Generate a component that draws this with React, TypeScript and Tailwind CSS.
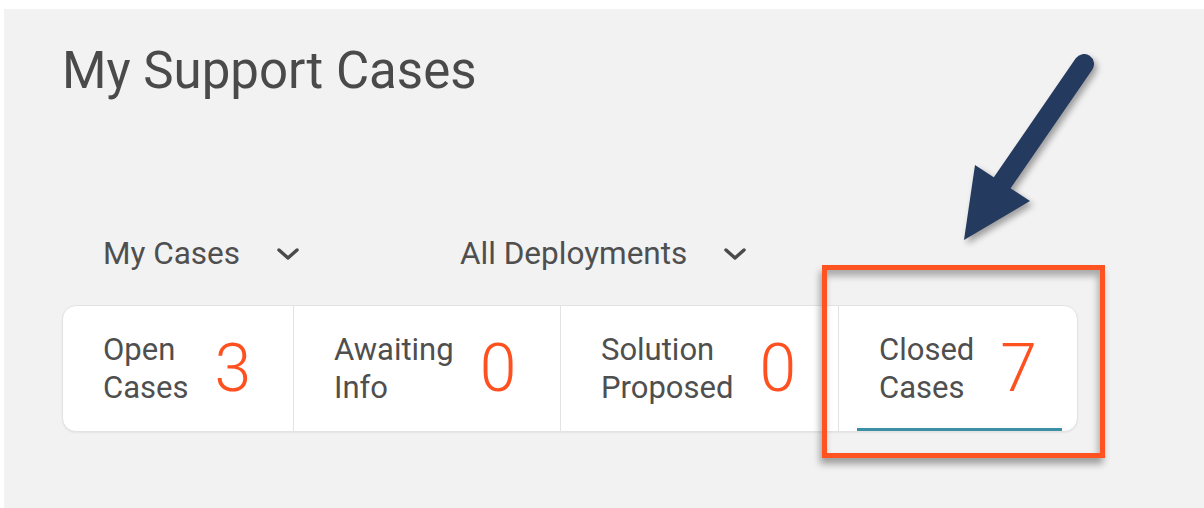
import React from "react";

type Stat = { label: [string, string]; count: number; width: string };

const stats: Stat[] = [
  { label: ["Open", "Cases"], count: 3, width: "w-[230px]" },
  { label: ["Awaiting", "Info"], count: 0, width: "w-[267px]" },
  { label: ["Solution", "Proposed"], count: 0, width: "w-[278px]" },
  { label: ["Closed", "Cases"], count: 7, width: "flex-1" },
];

const Chevron: React.FC = () => (
  <svg width="24" height="14" viewBox="0 0 24 14" fill="none">
    <polyline
      points="3,3 12,11 21,3"
      stroke="#4a4a4a"
      strokeWidth="3.4"
      strokeLinecap="round"
      strokeLinejoin="round"
    />
  </svg>
);

const Dropdown: React.FC<{ label: string; className?: string }> = ({ label, className }) => (
  <button className={`flex items-center gap-[36px] text-[31.5px] leading-[36px] text-[#4f4f4f] ${className ?? ""}`}>
    <span>{label}</span>
    <Chevron />
  </button>
);

const App: React.FC = () => {
  return (
    <div className="w-full h-[508px] bg-white pt-[9px] pl-[4px] font-[Roboto,sans-serif] overflow-hidden">
      <div className="relative h-full bg-[#f2f2f2] pl-[58px] pt-[32px]">
        <h1 className="text-[51px] leading-[60px] text-[#4a4a4a]">My Support Cases</h1>

        <div className="flex mt-[135px] pl-[41px]">
          <Dropdown label="My Cases" className="w-[357px]" />
          <Dropdown label="All Deployments" />
        </div>

        <div className="flex mt-[33px] w-[1016px] h-[127px] bg-white border border-[#e3e3e3] rounded-[14px] overflow-hidden shadow-[0_1px_2px_rgba(0,0,0,0.06)]">
          {stats.map((s, i) => (
            <div
              key={s.label.join(" ")}
              className={`relative flex items-center gap-[26px] pl-[40px] ${s.width} ${i > 0 ? "border-l border-[#e3e3e3]" : ""}`}
            >
              <div className="text-[31px] leading-[38px] text-[#4f4f4f]">
                <div>{s.label[0]}</div>
                <div>{s.label[1]}</div>
              </div>
              <span className="text-[66px] leading-none font-light text-[#ff5020]">{s.count}</span>
              {i === stats.length - 1 && (
                <div className="absolute bottom-0 left-[18px] right-[15px] h-[3px] bg-[#3d8fa6]" />
              )}
            </div>
          ))}
        </div>

        {/* callout around the closed cases tile */}
        <div className="absolute left-[818px] top-[256px] w-[283px] h-[193px] border-[5px] border-[#ff5421] shadow-[-2px_6px_7px_rgba(0,0,0,0.35),inset_-2px_6px_7px_rgba(0,0,0,0.3)]" />

        {/* pointer arrow */}
        <svg
          className="absolute left-[936px] top-[31px] drop-shadow-[3px_4px_3px_rgba(0,0,0,0.35)]"
          width="170"
          height="220"
          viewBox="940 40 170 220"
        >
          <line x1="1084" y1="64" x2="1000" y2="186" stroke="#243a5e" strokeWidth="20" strokeLinecap="round" />
          <polygon points="964,240 975,165 1030,201" fill="#243a5e" />
        </svg>
      </div>
    </div>
  );
};

export default App;
